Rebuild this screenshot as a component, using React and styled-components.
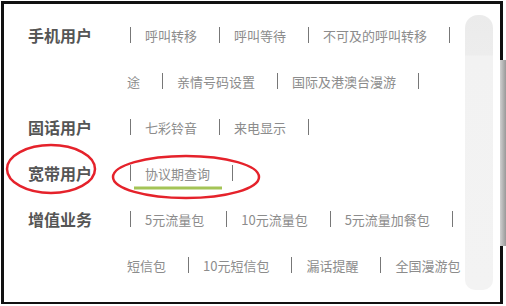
import React from 'react'
import styled, { createGlobalStyle } from 'styled-components'

const Global = createGlobalStyle`
  html, body { margin: 0; padding: 0; background: #fff; }
  body { font-family: "Noto Sans CJK SC", "Noto Sans", sans-serif; }
`

const Page = styled.div`
  position: relative;
  width: 506px;
  height: 306px;
  overflow: hidden;
`

const Frame = styled.div`
  position: relative;
  box-sizing: border-box;
  margin: 1px 0 0 1px;
  width: 502px;
  height: 303px;
  border: 3px solid #111;
  border-bottom-width: 2px;
  padding: 8px 0 0 24px;
  overflow: hidden;
  background: #fff;
`

const Group = styled.div`
  display: flex;
`

const Label = styled.div`
  width: 99px;
  height: 46px;
  line-height: 46px;
  font-size: 16px;
  font-weight: 700;
  color: #555;
  white-space: nowrap;
`

const Lines = styled.div`
  display: flex;
  flex-direction: column;
`

const Line = styled.div`
  display: flex;
  align-items: center;
  height: 46px;
  white-space: nowrap;
`

const Item = styled.span`
  font-size: 13px;
  color: #8c8c8c;
`

const Sep = styled.span`
  display: inline-block;
  width: 1px;
  height: 16px;
  background: #777;
  margin: 0 14px 0 ${p => (p.$first ? '3px' : '22px')};
`

const Notes = styled.svg`
  position: absolute;
  left: -4px;
  top: -4px;
  pointer-events: none;
`

const Smudge = styled.div`
  position: absolute;
  left: 461px;
  top: 11px;
  width: 28px;
  height: 275px;
  border-radius: 13px 13px 10px 10px;
  background: linear-gradient(to bottom, #ebebeb 0, #ededed 40px, #f2f2f2 41px, #f3f3f3 100%);
`

const EdgeShade = styled.div`
  position: absolute;
  left: 500px;
  top: 60px;
  width: 6px;
  height: 186px;
  background: linear-gradient(to right, #d0d0d0, #999);
`

const groups = [
  {
    label: '手机用户',
    lines: [
      { lead: true, items: ['呼叫转移', '呼叫等待', '不可及的呼叫转移'], tail: true },
      { items: ['途', '亲情号码设置', '国际及港澳台漫游'], tail: true },
    ],
  },
  { label: '固话用户', lines: [{ lead: true, items: ['七彩铃音', '来电显示'], tail: true }] },
  { label: '宽带用户', lines: [{ lead: true, items: ['协议期查询'], tail: true }] },
  {
    label: '增值业务',
    lines: [
      { lead: true, items: ['5元流量包', '10元流量包', '5元流量加餐包'], tail: true },
      { items: ['短信包', '10元短信包', '漏话提醒', '全国漫游包'] },
    ],
  },
]

const App = () => (
  <Page>
    <Global />
    <Frame>
      {groups.map(g => (
        <Group key={g.label}>
          <Label>{g.label}</Label>
          <Lines>
            {g.lines.map((ln, i) => (
              <Line key={i}>
                {ln.lead && <Sep $first />}
                {ln.items.map((t, j) => (
                  <React.Fragment key={t}>
                    {j > 0 && <Sep />}
                    <Item>{t}</Item>
                  </React.Fragment>
                ))}
                {ln.tail && <Sep />}
              </Line>
            ))}
          </Lines>
        </Group>
      ))}
      <Smudge />
      <Notes width="506" height="306" viewBox="0 0 506 306">
        <ellipse cx="51" cy="169" rx="44" ry="24" fill="none" stroke="#e5222b" strokeWidth="2.5" />
        <ellipse cx="186" cy="177" rx="73" ry="21" fill="none" stroke="#e5222b" strokeWidth="2.5" />
        <line x1="134" y1="188" x2="222" y2="188" stroke="#a4c456" strokeWidth="3" />
      </Notes>
    </Frame>
    <EdgeShade />
  </Page>
)

export default App
